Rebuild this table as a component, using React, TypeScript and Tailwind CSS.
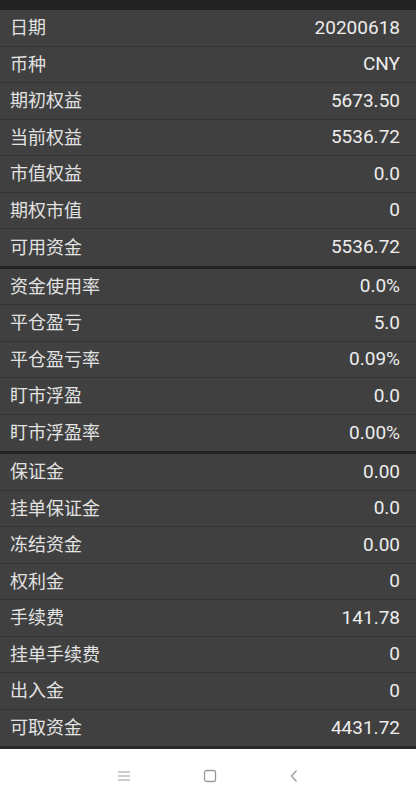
import React from "react"

type Row = [string, string]

const groups: Row[][] = [
    [
        ["日期", "20200618"],
        ["币种", "CNY"],
        ["期初权益", "5673.50"],
        ["当前权益", "5536.72"],
        ["市值权益", "0.0"],
        ["期权市值", "0"],
        ["可用资金", "5536.72"],
    ],
    [
        ["资金使用率", "0.0%"],
        ["平仓盈亏", "5.0"],
        ["平仓盈亏率", "0.09%"],
        ["盯市浮盈", "0.0"],
        ["盯市浮盈率", "0.00%"],
    ],
    [
        ["保证金", "0.00"],
        ["挂单保证金", "0.0"],
        ["冻结资金", "0.00"],
        ["权利金", "0"],
        ["手续费", "141.78"],
        ["挂单手续费", "0"],
        ["出入金", "0"],
        ["可取资金", "4431.72"],
    ],
]

const font = { fontFamily: "Roboto, 'Noto Sans CJK SC', sans-serif" }

export default function App() {
    return (
        <div className="w-[416px] h-[800px] flex flex-col bg-[#232323] overflow-hidden" style={font}>
            <div className="h-[10px] bg-[#222222]" />
            <div className="flex flex-col gap-[3px] bg-[#232323]">
                {groups.map((rows, gi) => (
                    <div key={gi} className="flex flex-col">
                        {rows.map(([label, value], i) => (
                            <div
                                key={label}
                                className={`h-[36.5px] flex items-center justify-between pl-[10px] pr-[16px] bg-[#404040] ${
                                    i < rows.length - 1 ? "border-b border-[#343434]" : ""
                                }`}
                            >
                                <span className="text-[18px] text-[#e2e2e2]">{label}</span>
                                <span className="text-[19px] text-[#ededed]">{value}</span>
                            </div>
                        ))}
                    </div>
                ))}
            </div>
            <div className="h-[3px] bg-[#2a2a2a]" />
            {/* android nav bar */}
            <div className="flex-1 bg-white flex items-center justify-center gap-[72px] pt-[2px]">
                <svg width="14" height="12" viewBox="0 0 14 12" fill="none" stroke="#9a9a9a" strokeWidth="1.2">
                    <path d="M1 2h12M1 6h12M1 10h12" />
                </svg>
                <svg width="14" height="14" viewBox="0 0 14 14" fill="none" stroke="#9a9a9a" strokeWidth="1.3">
                    <rect x="1.5" y="1.5" width="11" height="11" rx="2" />
                </svg>
                <svg width="10" height="14" viewBox="0 0 10 14" fill="none" stroke="#9a9a9a" strokeWidth="1.3">
                    <path d="M7.5 1.5L2.5 7l5 5.5" />
                </svg>
            </div>
        </div>
    )
}
